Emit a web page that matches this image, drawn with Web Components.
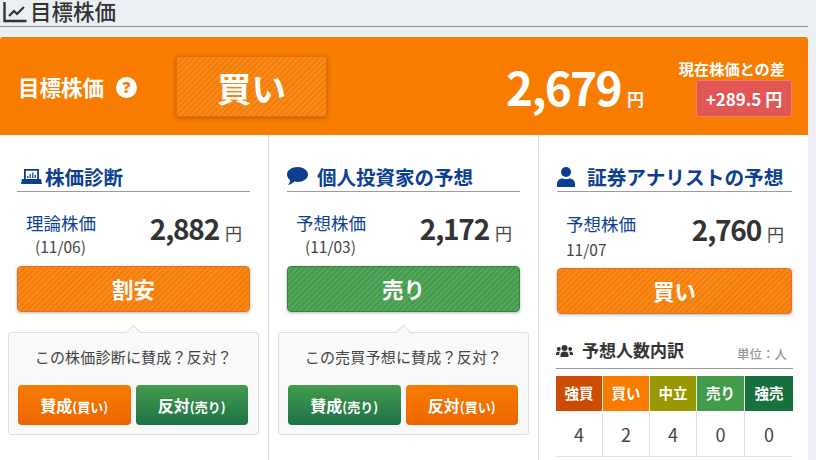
<!DOCTYPE html>
<html lang="ja">
<head>
<meta charset="utf-8">
<title>目標株価</title>
<style>
html, body { margin: 0; padding: 0; background: #ebeff3; overflow: hidden; }
body { width: 816px; height: 460px; font-family: "Noto Sans CJK JP", "Noto Sans", sans-serif; color: #333; }
.cols { display: grid; grid-template-columns: 269px 270px 269px; width: 808px; background: #fff; height: 325px; }
</style>
</head>
<body>
<page-title>目標株価</page-title>
<target-bar></target-bar>
<div class="cols">
  <forecast-col heading="株価診断" small icon="laptop" label="理論株価" date="(11/06)" price="2,882" kind="buy" verdict="割安">
    <vote-box question="この株価診断に賛成？反対？" first="buy"></vote-box>
  </forecast-col>
  <forecast-col heading="個人投資家の予想" icon="chat" label="予想株価" date="(11/03)" price="2,172" kind="sell" verdict="売り">
    <vote-box question="この売買予想に賛成？反対？" first="sell"></vote-box>
  </forecast-col>
  <forecast-col heading="証券アナリストの予想" icon="user" label="予想株価" date="11/07" price="2,760" kind="buy" verdict="買い" plain last>
    <people-table></people-table>
  </forecast-col>
</div>
<script>
const STRIPE_BUY = "repeating-linear-gradient(135deg,#f87c00 0 2px,#f48a24 2px 4px)"
const STRIPE_SELL = "repeating-linear-gradient(135deg,#439c4b 0 2px,#55a55d 2px 4px)"

class PageTitle extends HTMLElement {
  constructor() {
    super()
    this.attachShadow({mode: "open"}).innerHTML = `
    <style>
    :host { display: flex; align-items: flex-start; width: 808px; height: 26px; border-bottom: 1px solid #8f9396; margin-bottom: 10px; color: #333; font-size: 21.5px; font-weight: 500; line-height: 22px; }
    svg { width: 24px; height: 22px; margin: 1px 3px 0 3px; flex: none; }
    span { display: block; }
    </style>
    <svg viewBox="0 0 24 22" fill="none" stroke="#333" stroke-width="2.4"><path d="M1.500 1v19h22"/><path d="M6 15l5-5 3 3 7-7" stroke-width="2.2"/></svg>
    <span><slot></slot></span>`
  }
}
customElements.define("page-title", PageTitle)

class TargetBar extends HTMLElement {
  constructor() {
    super()
    this.attachShadow({mode: "open"}).innerHTML = `
    <style>
    :host { display: flex; align-items: center; width: 808px; height: 98px; background: #f87c00; color: #fff; border-radius: 3px 3px 0 0; font-weight: 700; }
    .name { font-size: 21.500px; margin: 2px 0 0 18px; line-height: 28px; width: 87px; white-space: nowrap; }
    .q { width: 21px; height: 21px; border-radius: 50%; background: #fff; color: #f87c00; font-size: 16px; line-height: 21px; text-align: center; margin: 2px 0 0 11px; font-weight: 900; font-family: "Noto Sans", sans-serif; }
    .stamp { width: 151px; height: 61px; margin: 0 0 0 39px; box-sizing: border-box; background: ${STRIPE_BUY}; border: 1px solid #e06f0a; border-radius: 2px; box-shadow: 0 1px 4px rgba(120,60,0,.55); display: flex; align-items: center; justify-content: center; font-size: 34.500px; line-height: 1; padding-top: 3px; }
    .price { margin-left: auto; display: flex; align-items: baseline; margin-right: 36px; }
    .num { font-size: 46px; line-height: 60px; font-weight: 700; letter-spacing: -1.7px; }
    .en { font-size: 17px; margin-left: 6px; }
    .diff { width: 112px; margin-right: 16px; display: flex; flex-direction: column; align-items: flex-end; margin-top: 3px; }
    .cap { font-size: 15.200px; line-height: 20px; white-space: nowrap; margin-right: 7px; }
    .val { width: 96px; height: 37px; margin: 2px 0 0; background: #e35656; border: 1px solid #ea8268; border-radius: 3px; box-sizing: border-box; font-size: 17px; line-height: 35px; text-align: center; white-space: nowrap; }
    </style>
    <div class="name">目標株価</div><div class="q">?</div>
    <div class="stamp">買い</div>
    <div class="price"><span class="num">2,679</span><span class="en">円</span></div>
    <div class="diff"><div class="cap">現在株価との差</div><div class="val">+289.5 円</div></div>`
  }
}
customElements.define("target-bar", TargetBar)

const ICONS = {
  laptop: `<svg width="21" height="17" viewBox="0 0 21 17"><path fill="#0c3f92" d="M3 1h15v10h2l1 5H0l1-5h2zm1.800 1.800V11h11.400V2.800z"/><path fill="#2f62ad" d="M6 10h1.500V8H6zm2.500 0H10V6H8.500zM11 10h1.500V4.500H11zm2.500 0H15V7h-1.500z"/></svg>`,
  chat: `<svg width="21" height="19" viewBox="0 0 21 19"><path fill="#0c3f92" d="M10.500 0C16.300 0 21 3.300 21 7.500S16.300 15 10.500 15c-1.100 0-2.200-.1-3.200-.4C6 16 3.800 17.600 1 18c1.200-1.200 2-2.800 2.100-4.900C1.200 11.700 0 9.700 0 7.500 0 3.300 4.700 0 10.500 0z"/></svg>`,
  user: `<svg width="18" height="20" viewBox="0 0 18 20"><circle cx="9" cy="5" r="5" fill="#0c3f92"/><path fill="#0c3f92" d="M0 20v-3c0-3.300 2.700-5.500 5.500-5.500 1 .5 2.200.8 3.500.8s2.500-.3 3.500-.8c2.800 0 5.500 2.200 5.500 5.500v3z"/></svg>`
}

class ForecastCol extends HTMLElement {
  connectedCallback() {
    const a = n => this.getAttribute(n) || ""
    const last = this.hasAttribute("last")
    const small = this.hasAttribute("small")
    this.attachShadow({mode: "open"}).innerHTML = `
    <style>
    :host { display: block; box-sizing: border-box; height: 325px; padding: 28px ${last ? 16 : 18}px 0 18px; border-right: ${last ? 0 : 1}px solid #dedede; }
    :host([small]) { padding-left: 17px; }
    h3 { margin: 0; display: flex; align-items: center; height: 28px; border-bottom: 1px solid #9b9b9b; color: #0c3f92; font-size: ${last ? 19.7 : 19.5}px; font-weight: 700; line-height: 26px; white-space: nowrap; }
    h3 .ic { display: flex; width: ${small ? 28 : 30}px; padding-left: ${small ? 4 : 0}px; box-sizing: border-box; margin-top: -1px; }
    h3 b { font-weight: 700; }
    .row { display: flex; height: ${last ? 76 : 74}px; box-sizing: border-box; padding: ${last ? 19 : 18}px 8px 0 9px; justify-content: space-between; }
    .label { color: #0c3f92; font-size: 17.500px; line-height: 26px; white-space: nowrap; }
    .date { color: #444; font-size: 15.500px; line-height: ${last ? 24 : 20}px; white-space: nowrap; margin-left: ${last ? 0 : 9}px; }
    .price { display: flex; align-items: baseline; line-height: 40px; margin-top: -2px; }
    .num { font-size: 28px; font-weight: 700; color: #333; letter-spacing: -1.2px; }
    .en { font-size: 17px; margin-left: 6px; color: #444; }
    .verdict { height: 46px; box-sizing: border-box; border: 1px solid ${a("kind") === "buy" ? "#e2702c" : "#2f8446"}; border-radius: 4px; box-shadow: 0 1px 3px rgba(0,0,0,.3); background: ${a("kind") === "buy" ? STRIPE_BUY : STRIPE_SELL}; color: #fff; font-size: 21.500px; font-weight: 700; text-align: center; line-height: 44px; }
    </style>
    <h3><span class="ic">${ICONS[a("icon")]}</span><b>${a("heading")}</b></h3>
    <div class="row">
      <div><div class="label">${a("label")}</div><div class="date">${a("date")}</div></div>
      <div class="price"><span class="num">${a("price")}</span><span class="en">円</span></div>
    </div>
    <div class="verdict">${a("verdict")}</div>
    <slot></slot>`
  }
}
customElements.define("forecast-col", ForecastCol)

class VoteBox extends HTMLElement {
  connectedCallback() {
    const buyFirst = this.getAttribute("first") === "buy"
    const btn = (word, buy) => `<div class="btn ${buy ? "buy" : "sell"}">${word}<small>(${buy ? "買い" : "売り"})</small></div>`
    this.attachShadow({mode: "open"}).innerHTML = `
    <style>
    :host { display: block; position: relative; box-sizing: border-box; width: 251px; height: 103px; margin: 20px 0 0 -9px; background: #f9f9f9; border: 1px solid #dedede; border-radius: 3px; }
    .arrow { position: absolute; left: 119px; top: -6px; width: 10px; height: 10px; background: #f9f9f9; border: 1px solid #dedede; border-width: 1px 0 0 1px; transform: rotate(45deg); }
    p { margin: 0; padding-top: 13px; height: 38px; box-sizing: border-box; text-align: center; font-size: 15px; line-height: 22px; color: #444; white-space: nowrap; letter-spacing: .2px; }
    .btns { display: flex; gap: 5px; padding: 14px 10px 0 9px; }
    .btn { flex: 1; height: 40px; border-radius: 4px; color: #fff; font-size: 16px; font-weight: 700; line-height: 40px; text-align: center; white-space: nowrap; }
    small { font-size: 13px; }
    .buy { background: linear-gradient(#f87c00, #ec6500); }
    .sell { background: linear-gradient(#439c4b, #1c7248); }
    </style>
    <div class="arrow"></div>
    <p>${this.getAttribute("question")}</p>
    <div class="btns">${btn("賛成", buyFirst)}${btn("反対", !buyFirst)}</div>`
  }
}
customElements.define("vote-box", VoteBox)

class PeopleTable extends HTMLElement {
  constructor() {
    super()
    const cols = [["強買", "#cb4c02", 4], ["買い", "#f87c00", 2], ["中立", "#989802", 4], ["売り", "#439c4b", 0], ["強売", "#18703f", 0]]
    this.attachShadow({mode: "open"}).innerHTML = `
    <style>
    :host { display: block; margin: 24px 0 0 -1px; width: 237px; }
    .head { display: flex; align-items: center; height: 30px; border-bottom: 1px solid #9b9b9b; }
    svg { flex: none; margin-right: 9px; position: relative; top: -2px; }
    h4 { margin: 0; font-size: 17px; font-weight: 700; color: #333; white-space: nowrap; line-height: 24px; position: relative; top: -3px; }
    .unit { margin-left: auto; font-size: 12.500px; color: #999; margin-right: 6px; font-weight: 500; }
    .grid { display: grid; grid-template-columns: 47px 47px 47px 48px 48px; margin-top: 7px; }
    .th { height: 35px; line-height: 34px; text-align: center; color: #fff; font-size: 14.500px; font-weight: 700; border-right: 1px solid #e8e8e8; box-sizing: border-box; }
    .td { height: 46px; line-height: 46px; text-align: center; font-size: 18px; color: #444; border-right: 1px solid #e0e0e0; border-bottom: 1px solid #e0e0e0; box-sizing: border-box; }
    .th:nth-child(5), .td:nth-child(10) { border-right: 0; }
    </style>
    <div class="head">
      <svg width="17" height="12" viewBox="0 0 17 12" fill="#333"><circle cx="8.500" cy="3" r="3"/><circle cx="2.800" cy="4" r="2"/><circle cx="14.200" cy="4" r="2"/><path d="M4.500 12V9.500C4.500 7.800 6 6.500 8.500 6.500s4 1.300 4 3V12zM0 10V8.500C0 7.300 1 6.700 2.800 6.700c.5 0 .8 0 1.200.1-.6.7-.8 1.500-.8 2.700v.5zM17 10V8.500c0-1.200-1-1.800-2.800-1.800-.5 0-.8 0-1.200.1.6.7.8 1.500.8 2.700v.5z"/></svg>
      <h4>予想人数内訳</h4>
      <span class="unit">単位：人</span>
    </div>
    <div class="grid">
      ${cols.map(c => `<div class="th" style="background:${c[1]}">${c[0]}</div>`).join("")}
      ${cols.map(c => `<div class="td">${c[2]}</div>`).join("")}
    </div>`
  }
}
customElements.define("people-table", PeopleTable)
</script>
</body>
</html>
